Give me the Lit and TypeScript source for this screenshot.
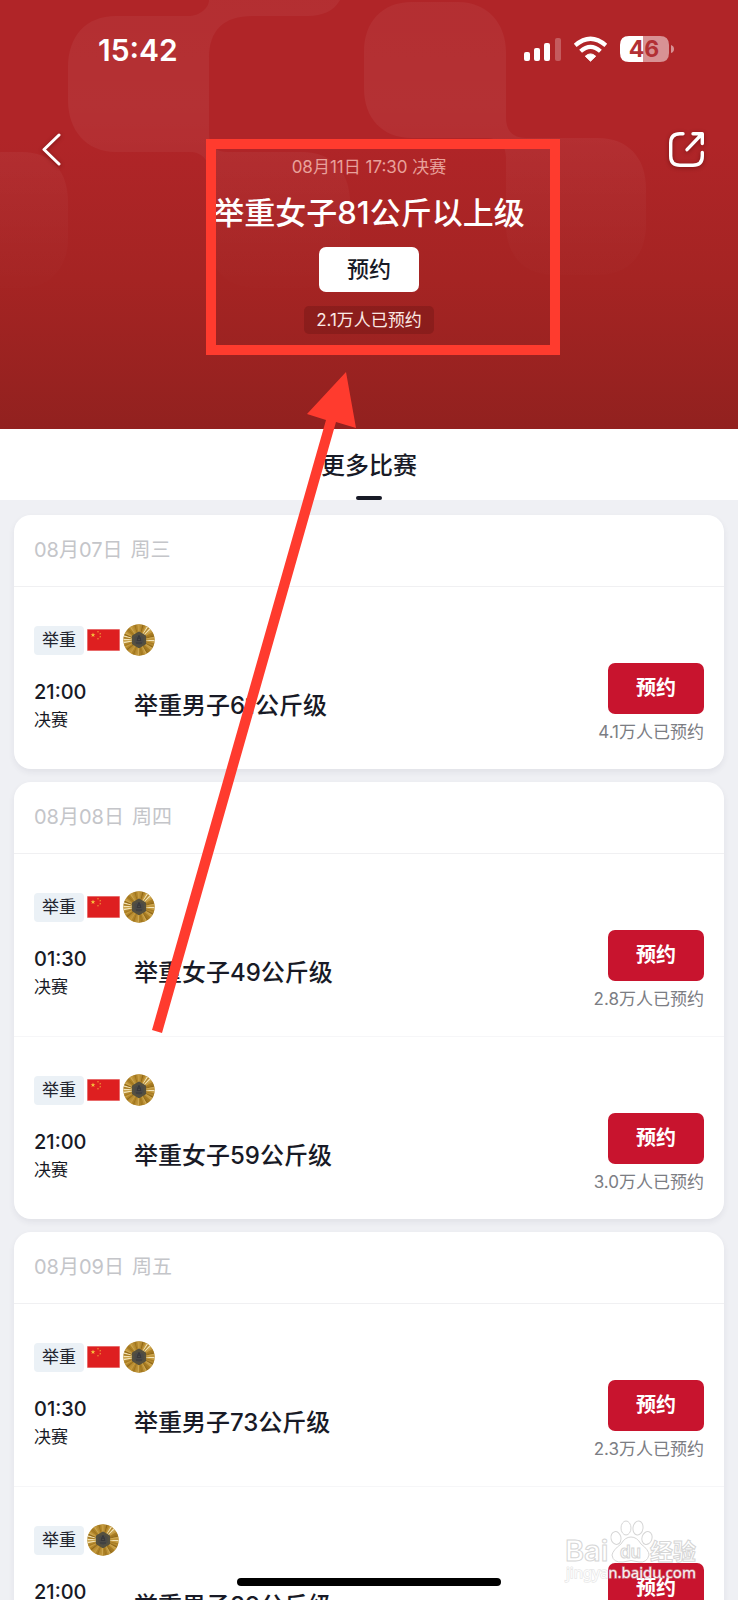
import { LitElement, html, css, svg, nothing } from "lit";
import { customElement, property } from "lit/decorators.js";

interface Match {
  time: string;
  title: string;
  booked?: string;
  china: boolean;
}

interface Day {
  date: string;
  weekday: string;
  matches: Match[];
}

const DAYS: Day[] = [
  {
    date: "08月07日",
    weekday: "周三",
    matches: [{ time: "21:00", title: "举重男子61公斤级", booked: "4.1万人已预约", china: true }],
  },
  {
    date: "08月08日",
    weekday: "周四",
    matches: [
      { time: "01:30", title: "举重女子49公斤级", booked: "2.8万人已预约", china: true },
      { time: "21:00", title: "举重女子59公斤级", booked: "3.0万人已预约", china: true },
    ],
  },
  {
    date: "08月09日",
    weekday: "周五",
    matches: [
      { time: "01:30", title: "举重男子73公斤级", booked: "2.3万人已预约", china: true },
      { time: "21:00", title: "举重男子89公斤级", china: false },
    ],
  },
];

const STAR = "M0-10 2.4-3.1 9.5-3.1 3.8 1.2 5.9 8.1 0 3.9-5.9 8.1-3.8 1.2-9.5-3.1-2.4-3.1Z";

const flag = html`
  <svg class="flag" viewBox="0 0 33 22" role="img" aria-label="中国">
    <rect width="33" height="22" fill="#f3b9b6" />
    <rect x=".5" y=".5" width="32" height="21" fill="#de1f20" />
    <g fill="#f6c33c">
      <path transform="translate(6 6) scale(.25)" d=${STAR} />
      <path transform="translate(11 2.8) scale(.1)" d=${STAR} />
      <path transform="translate(13.2 4.8) scale(.1)" d=${STAR} />
      <path transform="translate(13.2 7.8) scale(.1)" d=${STAR} />
      <path transform="translate(11 9.8) scale(.1)" d=${STAR} />
    </g>
  </svg>
`;

// Golden rays round a dark hexagonal core, with pale glints on the left, right and top.
const RAY_TONES = ["#b08428", "#c0953a", "#a0761f", "#cda750", "#a87c24", "#936a1a", "#c79c40", "#b58a30"];
const GLINTS = new Set([0, 28, 30, 32, 50, 52]);
const rays = Array.from({ length: 60 }, (_, i) => {
  const a = (i * Math.PI) / 30;
  const b = ((i + 1) * Math.PI) / 30;
  const tone = GLINTS.has(i) ? "#f3e3b4" : RAY_TONES[(i * 5 + (i % 3)) % 8];
  return svg`<path fill=${tone}
    d="M16 16L${16 + 15.4 * Math.cos(a)} ${16 + 15.4 * Math.sin(a)}L${16 + 15.4 * Math.cos(b)} ${16 + 15.4 * Math.sin(b)}Z" />`;
});

const medal = html`
  <svg class="medal" viewBox="0 0 32 32" role="img" aria-label="金牌">
    <circle cx="16" cy="16" r="15.7" fill="#b48a30" />
    ${rays}
    <path d="M16 9 21.800 12.300V19.300L16 22.800 10.200 19.300V12.300Z" fill="#4b4a48" stroke="#55503f" stroke-width="2.6" stroke-linejoin="round" />
    <path d="M16 11.5l-2 5h4zM13 19h6M14 14.200h4" fill="none" stroke="#38383a" stroke-width="1" />
  </svg>
`;

@customElement("match-row")
export class MatchRow extends LitElement {
  @property({ attribute: false }) match!: Match;

  static styles = css`
    :host {
      display: block;
      padding: 37px 20px 26px;
    }
    .tags {
      display: flex;
      align-items: center;
      gap: 3px;
      height: 32px;
      margin-bottom: 7px;
    }
    .tag {
      padding: 0 8px;
      border-radius: 4px;
      background: #ebf1f6;
      color: #23252f;
      font-size: 17px;
      line-height: 29px;
    }
    .flag {
      width: 33px;
      height: 22px;
    }
    .medal {
      width: 32px;
      height: 32px;
    }
    .main {
      display: grid;
      grid-template-columns: 100px 1fr auto;
      align-items: start;
    }
    .when,
    .title {
      padding-top: 15px;
    }
    .time {
      display: block;
      font-size: 20px;
      font-weight: 500;
      line-height: 28px;
    }
    .stage {
      font-size: 17px;
      line-height: 28px;
    }
    .title {
      margin: 0;
      font-size: 24px;
      font-weight: 500;
      line-height: 56px;
    }
    .booking {
      display: flex;
      flex-direction: column;
      align-items: flex-end;
      gap: 6px;
      height: 80px;
    }
    .book {
      padding: 0 28px;
      border: 0;
      border-radius: 7px;
      background: #c8142e;
      color: #fff;
      font: inherit;
      font-size: 20px;
      font-weight: 700;
      line-height: 51px;
    }
    .count {
      color: #7b7d83;
      font-size: 17px;
      line-height: 24px;
    }
  `;

  render() {
    const m = this.match;
    return html`
      <div class="tags">
        <span class="tag">举重</span>
        ${m.china ? flag : nothing} ${medal}
      </div>
      <div class="main">
        <div class="when"><time class="time">${m.time}</time><span class="stage">决赛</span></div>
        <h3 class="title">${m.title}</h3>
        <div class="booking">
          <button class="book" type="button">预约</button>
          ${m.booked ? html`<span class="count">${m.booked}</span>` : nothing}
        </div>
      </div>
    `;
  }
}

@customElement("app-root")
export class AppRoot extends LitElement {
  static styles = css`
    :host {
      display: block;
      position: relative;
      height: 100vh;
      overflow: hidden;
      background: #eff0f4;
      color: #181a26;
      font-family: Inter, "Noto Sans CJK SC", sans-serif;
    }
    .hero {
      position: relative;
      padding-bottom: 95px;
      background: linear-gradient(#b02528 0%, #b02528 32%, #a52423 65%, #92211f 100%);
      color: #fff;
    }
    .pattern {
      position: absolute;
      top: 0;
      left: 0;
    }
    .status {
      position: relative;
      display: flex;
      justify-content: space-between;
      align-items: center;
      height: 100px;
      padding: 0 64px 0 98px;
    }
    .clock {
      font-size: 30px;
      font-weight: 600;
    }
    .bar {
      position: relative;
      display: flex;
      justify-content: space-between;
      padding: 28px 30px 0 36px;
    }
    .icon-button {
      display: block;
      padding: 0;
      border: 0;
      background: none;
      line-height: 0;
    }
    .icon-button svg {
      filter: drop-shadow(0 1px 2px rgba(60, 0, 0, 0.45));
    }
    .summary {
      position: relative;
      display: flex;
      flex-direction: column;
      align-items: center;
      margin-top: -15px;
    }
    .session {
      color: #e8a19b;
      font-size: 17px;
      line-height: 24px;
    }
    .event {
      margin: 11px 0;
      font-size: 31px;
      font-weight: 500;
      line-height: 46px;
    }
    .reserve {
      padding: 0 28px;
      border: 0;
      border-radius: 7px;
      background: #fff;
      color: #181a26;
      font: inherit;
      font-size: 22px;
      font-weight: 500;
      line-height: 45px;
    }
    .reserved {
      margin-top: 14px;
      padding: 0 12px;
      border-radius: 5px;
      background: rgba(80, 10, 10, 0.25);
      color: #fbe9e4;
      font-size: 17px;
      line-height: 28px;
    }
    .tabs {
      display: flex;
      justify-content: center;
      background: #fff;
    }
    .tab {
      display: flex;
      flex-direction: column;
      align-items: center;
      gap: 12px;
      padding-top: 19px;
      color: inherit;
      font-size: 24px;
      font-weight: 500;
      line-height: 36px;
      text-decoration: none;
    }
    .tab::after {
      content: "";
      width: 26px;
      height: 4px;
      border-radius: 2px;
      background: #181a26;
    }
    .days {
      display: flex;
      flex-direction: column;
      gap: 13px;
      padding: 15px 14px;
    }
    .day {
      border-radius: 17px;
      background: #fff;
      box-shadow: 0 3px 6px rgba(40, 45, 70, 0.07);
    }
    .date {
      display: flex;
      gap: 8px;
      margin: 0;
      padding: 0 20px;
      border-bottom: 1px solid #f0f0f2;
      color: #c4c5c9;
      font-size: 20px;
      font-weight: 400;
      line-height: 71px;
    }
    match-row + match-row {
      border-top: 1px solid #f6f6f8;
    }
    .home {
      position: absolute;
      bottom: 14px;
      left: 50%;
      width: 264px;
      height: 8px;
      margin-left: -132px;
      border-radius: 4px;
      background: #000;
    }
    .marks {
      position: absolute;
      top: 0;
      left: 50%;
      margin-left: -369px;
      pointer-events: none;
    }
    .watermark {
      position: absolute;
      right: 36px;
      bottom: 8px;
      pointer-events: none;
    }
  `;

  private pattern() {
    return html`
      <svg class="pattern" width="738" height="429" viewBox="0 0 738 429" aria-hidden="true">
        <defs>
          <linearGradient id="fade" x1="0" y1="0" x2="0" y2="300" gradientUnits="userSpaceOnUse">
            <stop offset="0" stop-color="#fff" stop-opacity=".045" />
            <stop offset=".35" stop-color="#fff" stop-opacity=".055" />
            <stop offset="1" stop-color="#fff" stop-opacity="0" />
          </linearGradient>
        </defs>
        <g fill="url(#fade)">
          <path
            d="M116 16H188C200 16 209 8 209 0H340C334 11 322 16 308 16H252C224 16 209 30 209 58V134C209 146 216 152 228 152H302C332 152 350 172 350 202V240C350 270 332 288 302 288H257C227 288 209 270 209 240V172C209 160 202 152 190 152H116C86 152 68 130 68 100V68C68 36 86 16 116 16Z"
          />
          <path
            d="M412 2H458C488 2 506 24 506 52V118C506 130 512 138 526 138H598C628 138 646 158 646 188V225C646 255 628 275 598 275H554C524 275 506 255 506 225V158C506 146 500 138 486 138H412C382 138 364 118 364 88V52C364 22 382 2 412 2Z"
          />
          <path d="M0 152H22C52 152 68 172 68 202V238C68 268 50 288 22 288H0Z" />
        </g>
      </svg>
    `;
  }

  private statusIcons() {
    return html`
      <svg width="152" height="30" viewBox="0 0 152 30" role="img" aria-label="信号、无线网络、电量">
        <g fill="#fff">
          <rect x="2" y="17" width="6" height="9" rx="2" />
          <rect x="12" y="13" width="6" height="13" rx="2" />
          <rect x="22" y="8" width="6" height="18" rx="2" />
          <rect x="33" y="3" width="6" height="23" rx="2" opacity=".25" />
          <path d="M68.5 26.2 63.3 21.2Q68.5 16.6 73.7 21.2Z" stroke="#fff" stroke-linejoin="round" />
        </g>
        <g fill="none" stroke="#fff" stroke-width="4.2">
          <path d="M53.2 10.4Q68.5-2.8 83.8 10.4" />
          <path d="M58.6 16.3Q68.5 7.4 78.4 16.3" />
        </g>
        <path d="M107 1H121V27H107Q98 27 98 18V10Q98 1 107 1Z" fill="#fff" />
        <path d="M121 1H138Q147 1 147 10V18Q147 27 138 27H121Z" fill="#fff" opacity=".5" />
        <path d="M149 10Q152 11 152 14T149 18Z" fill="#fff" opacity=".5" />
        <text x="122" y="22" text-anchor="middle" font-size="23" font-weight="700" fill="#b23034">46</text>
      </svg>
    `;
  }

  private marks() {
    return html`
      <svg class="marks" width="738" height="1040" viewBox="0 0 738 1040" aria-hidden="true">
        <rect x="211" y="144" width="344" height="206" fill="none" stroke="#ff3b2e" stroke-width="10" />
        <path d="M346 372 307 414 326 420 152 1030 162 1033 336 422 356 428Z" fill="#ff3b2e" />
      </svg>
    `;
  }

  private watermark() {
    return html`
      <svg class="watermark" width="138" height="74" viewBox="0 0 138 74" role="img" aria-label="Baidu 经验">
        <g fill="#fff" fill-opacity=".75" stroke="#d6d6d6" stroke-width="1">
          <ellipse cx="52" cy="20" rx="5" ry="6.5" transform="rotate(-12 52 20)" />
          <ellipse cx="62" cy="10" rx="5" ry="7" />
          <ellipse cx="74" cy="10" rx="5" ry="7" transform="rotate(8 74 10)" />
          <ellipse cx="83" cy="20" rx="5" ry="6.5" transform="rotate(18 83 20)" />
          <path d="M67 19Q73 19 77 26 85 32 85 37 83 45 75 44 67 41 59 44 49 45 48 37 49 32 57 26 61 19 67 19Z" />
          <text x="1" y="43" font-size="29" font-weight="600">Bai</text>
          <text x="56" y="40" font-size="17" font-weight="600">du</text>
          <text x="86" y="42" font-size="23" font-weight="700">经验</text>
        </g>
        <text
          x="2"
          y="60"
          font-family="Noto Sans, sans-serif"
          font-size="15"
          fill="#fff"
          fill-opacity=".9"
          stroke="#d0d0d0"
          stroke-opacity=".5"
          stroke-width="1.4"
          paint-order="stroke"
        >jingyan.baidu.com</text>
      </svg>
    `;
  }

  render() {
    return html`
      <header class="hero">
        ${this.pattern()}
        <div class="status"><span class="clock">15:42</span>${this.statusIcons()}</div>
        <div class="bar">
          <button class="icon-button" type="button" aria-label="返回">
            <svg width="32" height="42" viewBox="0 0 32 42" fill="none" stroke="#fff" stroke-width="3" stroke-linecap="round" stroke-linejoin="round">
              <path d="M23 7 8 21.500 23 36" />
            </svg>
          </button>
          <button class="icon-button" type="button" aria-label="分享">
            <svg width="42" height="42" viewBox="0 0 42 42" fill="none" stroke="#fff" stroke-width="3.4" stroke-linecap="round" stroke-linejoin="round">
              <path d="M17 5.700H14Q4.700 5.700 4.700 15V28Q4.700 37.300 14 37.300H27Q36.300 37.300 36.300 28V24.500" />
              <path d="M27 5.700H36.300V15.500M35.500 6.500 21 21.700" />
            </svg>
          </button>
        </div>
        <div class="summary">
          <span class="session">08月11日 17:30 决赛</span>
          <h1 class="event">举重女子81公斤以上级</h1>
          <button class="reserve" type="button">预约</button>
          <span class="reserved">2.1万人已预约</span>
        </div>
      </header>
      <nav class="tabs"><a class="tab" href="#more">更多比赛</a></nav>
      <main class="days" id="more">
        ${DAYS.map(
          (day) => html`
            <section class="day">
              <h2 class="date"><span>${day.date}</span><span>${day.weekday}</span></h2>
              ${day.matches.map((m) => html`<match-row .match=${m}></match-row>`)}
            </section>
          `,
        )}
      </main>
      ${this.marks()} ${this.watermark()}
      <div class="home"></div>
    `;
  }
}
